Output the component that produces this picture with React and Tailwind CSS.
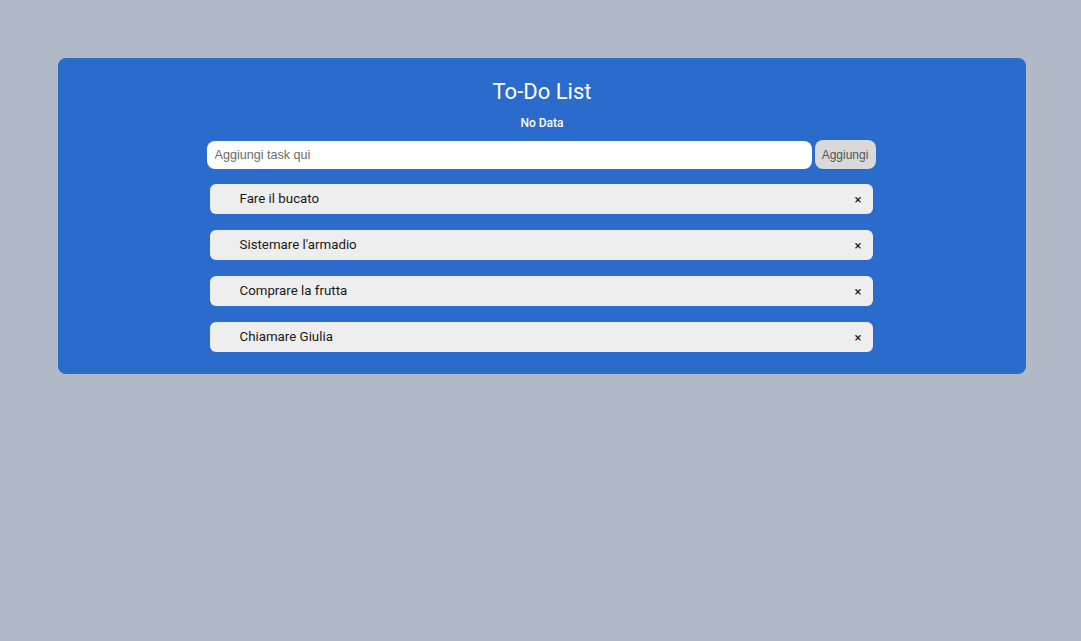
import React, { useState } from "react";

export default function App() {
  const [tasks, setTasks] = useState([
    "Fare il bucato",
    "Sistemare l'armadio",
    "Comprare la frutta",
    "Chiamare Giulia",
  ]);
  const [text, setText] = useState("");

  const addTask = () => {
    if (!text.trim()) return;
    setTasks([...tasks, text.trim()]);
    setText("");
  };

  const removeTask = (index) => {
    setTasks(tasks.filter((_, i) => i !== index));
  };

  return (
    <div className="min-h-[641px] bg-[#b1b8c6] pt-[58px] font-['Roboto',sans-serif]">
      <div className="ml-[58px] w-[968px] rounded-lg bg-[#2a6bcc] pt-[20px] pb-[22px] flex flex-col items-center">
        <h1 className="text-white text-[22px] leading-[28px]">To-Do List</h1>
        <p className="mt-[9px] text-white text-[12px] font-medium leading-[16px]">No Data</p>

        <div className="mt-[9px] mr-[2px] flex items-center gap-[3px]">
          <input
            type="text"
            value={text}
            onChange={(e) => setText(e.target.value)}
            placeholder="Aggiungi task qui"
            className="w-[605px] h-[28px] rounded-lg bg-white px-[8px] text-[12.6px] font-['Liberation_Sans',sans-serif] text-gray-800 placeholder:text-[#6b6b6b] outline-none"
          />
          <button
            type="button"
            onClick={addTask}
            className="h-[29px] w-[61px] rounded-lg bg-[#d9d9d9] text-[12px] font-['Liberation_Sans',sans-serif] text-[#555]"
          >
            Aggiungi
          </button>
        </div>

        <ul className="mt-[15px] mr-[2px] flex flex-col gap-[16px]">
          {tasks.map((task, index) => (
            <li
              key={index}
              className="w-[663px] h-[30px] rounded-md bg-[#eeeeee] flex items-center justify-between pl-[30px] pr-[11px]"
            >
              <span className="text-[13.3px] text-[#1a1a1a]">{task}</span>
              <button
                type="button"
                onClick={() => removeTask(index)}
                className="text-[13px] text-[#111] leading-none"
              >
                ×
              </button>
            </li>
          ))}
        </ul>
      </div>
    </div>
  );
}
